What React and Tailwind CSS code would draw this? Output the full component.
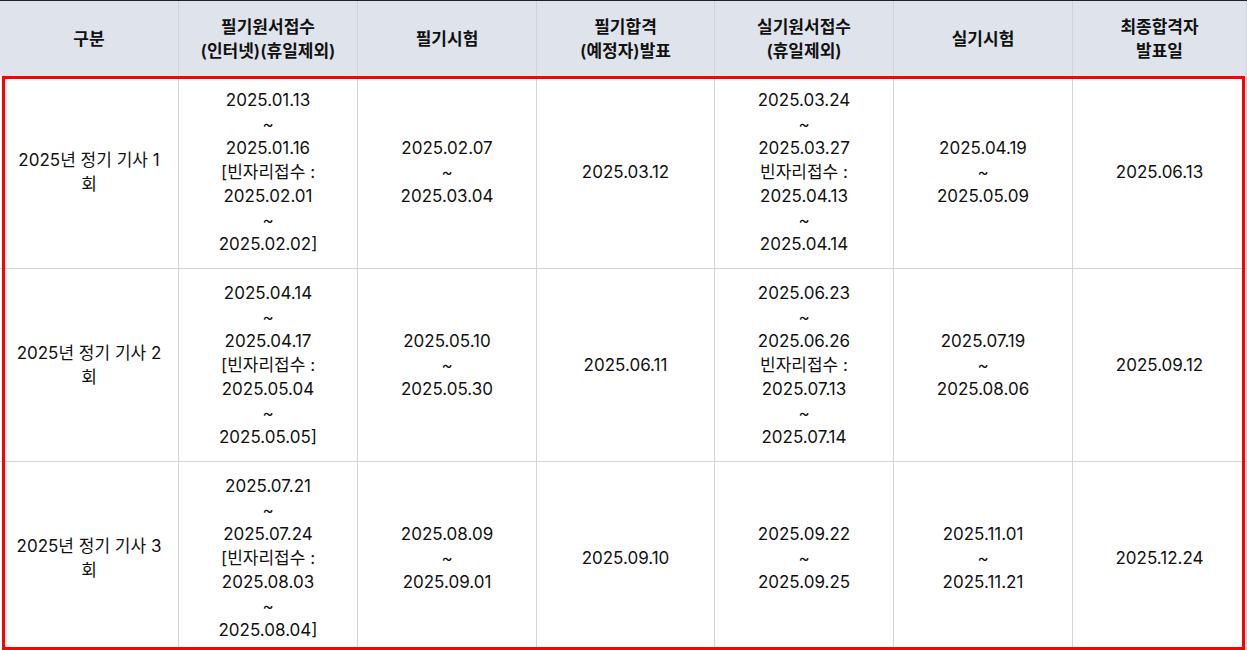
const headers = [
  ['구분'],
  ['필기원서접수', '(인터넷)(휴일제외)'],
  ['필기시험'],
  ['필기합격', '(예정자)발표'],
  ['실기원서접수', '(휴일제외)'],
  ['실기시험'],
  ['최종합격자', '발표일'],
];

const rows = [
  [
    ['2025년 정기 기사 1', '회'],
    ['2025.01.13', '~', '2025.01.16', '[빈자리접수 :', '2025.02.01', '~', '2025.02.02]'],
    ['2025.02.07', '~', '2025.03.04'],
    ['2025.03.12'],
    ['2025.03.24', '~', '2025.03.27', '빈자리접수 :', '2025.04.13', '~', '2025.04.14'],
    ['2025.04.19', '~', '2025.05.09'],
    ['2025.06.13'],
  ],
  [
    ['2025년 정기 기사 2', '회'],
    ['2025.04.14', '~', '2025.04.17', '[빈자리접수 :', '2025.05.04', '~', '2025.05.05]'],
    ['2025.05.10', '~', '2025.05.30'],
    ['2025.06.11'],
    ['2025.06.23', '~', '2025.06.26', '빈자리접수 :', '2025.07.13', '~', '2025.07.14'],
    ['2025.07.19', '~', '2025.08.06'],
    ['2025.09.12'],
  ],
  [
    ['2025년 정기 기사 3', '회'],
    ['2025.07.21', '~', '2025.07.24', '[빈자리접수 :', '2025.08.03', '~', '2025.08.04]'],
    ['2025.08.09', '~', '2025.09.01'],
    ['2025.09.10'],
    ['2025.09.22', '~', '2025.09.25'],
    ['2025.11.01', '~', '2025.11.21'],
    ['2025.12.24'],
  ],
];

const cols = 'grid grid-cols-[179px_179px_179px_178px_179px_179px_1fr]';

function Lines({ lines }) {
  return lines.map((l, i) => (
    <div key={i} className="whitespace-nowrap">{l}</div>
  ));
}

export default function App() {
  return (
    <div
      className="w-[1247px] h-[650px] overflow-hidden bg-white text-[17px] leading-6 text-[#111]"
      style={{ fontFamily: "Inter, 'Noto Sans CJK KR', sans-serif" }}
    >
      <div className={`${cols} h-[76px] border-t border-[#222] bg-[#dfe3eb]`}>
        {headers.map((h, i) => (
          <div
            key={i}
            className="flex flex-col items-center justify-center border-r border-[#cfd3da] font-semibold text-center"
          >
            <Lines lines={h} />
          </div>
        ))}
      </div>
      <div className="relative">
        {rows.map((r, ri) => (
          <div key={ri} className={`${cols} h-[193px] border-b border-[#d4d4d4]`}>
            {r.map((c, ci) => (
              <div
                key={ci}
                className="flex flex-col items-center justify-center border-r border-[#d4d4d4] text-center"
              >
                <Lines lines={c} />
              </div>
            ))}
          </div>
        ))}
        <div className="pointer-events-none absolute left-[2px] top-0 h-[574px] w-[1243px] border-[3px] border-[#ff0000]" />
      </div>
    </div>
  );
}
